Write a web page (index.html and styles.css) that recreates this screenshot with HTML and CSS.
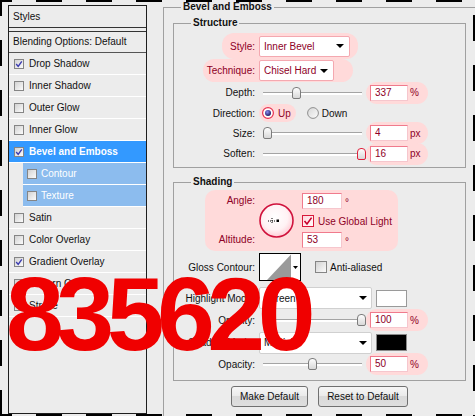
FILE: index.html
```html
<!DOCTYPE html>
<html>
<head>
<meta charset="utf-8">
<title>Layer Style - Bevel and Emboss</title>
<link rel="stylesheet" href="styles.css">
</head>
<body>
<div class="dialog">
  <nav class="styles-panel">
    <div class="panel-head">Styles</div>
    <div class="panel-blend">Blending Options: Default</div>
    <div class="item"><span class="cb"><svg viewBox="0 0 8 8"><path d="M1.2 4 L3.2 6.4 L6.8 1.4" fill="none" stroke="#3b3bb0" stroke-width="1.4"/></svg></span>Drop Shadow</div>
    <div class="item"><span class="cb"></span>Inner Shadow</div>
    <div class="item"><span class="cb"></span>Outer Glow</div>
    <div class="item"><span class="cb"></span>Inner Glow</div>
    <div class="item selected"><span class="cb"><svg viewBox="0 0 8 8"><path d="M1.2 4 L3.2 6.4 L6.8 1.4" fill="none" stroke="#3b3bb0" stroke-width="1.4"/></svg></span>Bevel and Emboss</div>
    <div class="item sub"><span class="cb"></span>Contour</div>
    <div class="item sub"><span class="cb"></span>Texture</div>
    <div class="item"><span class="cb"></span>Satin</div>
    <div class="item"><span class="cb"></span>Color Overlay</div>
    <div class="item"><span class="cb"><svg viewBox="0 0 8 8"><path d="M1.2 4 L3.2 6.4 L6.8 1.4" fill="none" stroke="#3b3bb0" stroke-width="1.4"/></svg></span>Gradient Overlay</div>
    <div class="item"><span class="cb"><svg viewBox="0 0 8 8"><path d="M1.2 4 L3.2 6.4 L6.8 1.4" fill="none" stroke="#3b3bb0" stroke-width="1.4"/></svg></span>Pattern Overlay</div>
    <div class="item"><span class="cb"></span>Stroke</div>
  </nav>

  <div class="settings">
    <fieldset class="group outer">
      <legend>Bevel and Emboss</legend>

      <fieldset class="group structure">
        <legend>Structure</legend>
        <div class="rows">
          <div class="row">
            <div class="hl hl-style">
              <span class="label">Style:</span>
              <div class="select red sel-style"><span>Inner Bevel</span><i class="arrow"></i></div>
            </div>
          </div>
          <div class="row">
            <div class="hl hl-tech">
              <span class="label">Technique:</span>
              <div class="select red sel-tech"><span>Chisel Hard</span><i class="arrow"></i></div>
            </div>
          </div>
          <div class="row">
            <span class="label">Depth:</span>
            <div class="slider"><i class="thumb" style="left:33px"></i></div>
            <div class="numhl"><span class="num">337</span><span class="unit">%</span></div>
          </div>
          <div class="row">
            <span class="label">Direction:</span>
            <div class="radio-hl">
              <svg class="radio" viewBox="0 0 12 12">
                <defs><radialGradient id="dot" cx="0.4" cy="0.35" r="0.7"><stop offset="0" stop-color="#8c8cf0"/><stop offset="1" stop-color="#14145a"/></radialGradient></defs>
                <circle cx="6" cy="6" r="5.4" fill="#fff" stroke="#e8304e" stroke-width="1.2"/>
                <circle cx="6" cy="6" r="3" fill="url(#dot)"/>
              </svg>
              <span class="hl-text">Up</span>
            </div>
            <div class="radio-off">
              <svg class="radio" viewBox="0 0 12 12">
                <defs><linearGradient id="rg" x1="0" y1="0" x2="1" y2="1"><stop offset="0" stop-color="#d6d6d6"/><stop offset="1" stop-color="#fdfdfd"/></linearGradient></defs>
                <circle cx="6" cy="6" r="5.4" fill="url(#rg)" stroke="#8e8e8e" stroke-width="1"/>
              </svg>
              <span>Down</span>
            </div>
          </div>
          <div class="row">
            <span class="label">Size:</span>
            <div class="slider"><i class="thumb" style="left:4px"></i></div>
            <div class="numhl"><span class="num">4</span><span class="unit">px</span></div>
          </div>
          <div class="row">
            <span class="label">Soften:</span>
            <div class="slider"><i class="thumb red" style="left:98px"></i></div>
            <div class="numhl"><span class="num">16</span><span class="unit">px</span></div>
          </div>
        </div>
      </fieldset>

      <fieldset class="group shading">
        <legend>Shading</legend>
        <div class="angle-box">
          <div class="angle-labels"><span>Angle:</span><span>Altitude:</span></div>
          <svg class="dial" viewBox="0 0 35 35">
            <defs><radialGradient id="dialfill" cx="0.45" cy="0.4" r="0.65"><stop offset="0" stop-color="#ffffff"/><stop offset="0.6" stop-color="#fff2f4"/><stop offset="1" stop-color="#ffc4ce"/></radialGradient></defs>
            <circle cx="17.5" cy="17.5" r="16.5" fill="url(#dialfill)" stroke="#d0123c" stroke-width="1.6"/>
            <line x1="9" y1="18" x2="17" y2="18" stroke="#000" stroke-width="1" stroke-dasharray="1 1"/>
            <line x1="13" y1="15" x2="13" y2="21" stroke="#000" stroke-width="1" stroke-dasharray="1 1"/>
            <rect x="17.5" y="16.5" width="2.5" height="2.5" fill="#000"/>
          </svg>
          <div class="angle-fields">
            <div class="field"><span class="num wide">180</span><span class="deg">°</span></div>
            <div class="global"><span class="cb cb-red"><svg viewBox="0 0 10 10"><path d="M1.5 5 L4 8 L8.6 1.6" fill="none" stroke="#c8002c" stroke-width="1.6"/></svg></span><span>Use Global Light</span></div>
            <div class="field"><span class="num wide">53</span><span class="deg">°</span></div>
          </div>
        </div>

        <div class="row gloss-row">
          <span class="label">Gloss Contour:</span>
          <svg class="contour" viewBox="0 0 42 28">
            <rect x="0.5" y="0.5" width="41" height="27" fill="#fff" stroke="#000"/>
            <polygon points="8,27 32,1.5 32,27" fill="#9a9a9a"/>
            <polygon points="34,13 39,13 36.5,16" fill="#000"/>
          </svg>
          <div class="aa"><span class="cb"></span><span>Anti-aliased</span></div>
        </div>

        <div class="row mode-row first">
          <span class="label">Highlight Mode:</span>
          <div class="select sel-mode"><span>Screen</span><i class="arrow"></i></div>
          <span class="swatch"></span>
        </div>
        <div class="row op-row">
          <span class="label">Opacity:</span>
          <div class="slider"><i class="thumb" style="left:98px"></i></div>
          <div class="numhl"><span class="num">100</span><span class="unit">%</span></div>
        </div>
        <div class="row mode-row shadow">
          <span class="label">Shadow Mode:</span>
          <div class="select sel-mode"><span>Multiply</span><i class="arrow"></i></div>
          <span class="swatch black"></span>
        </div>
        <div class="row op-row last">
          <span class="label">Opacity:</span>
          <div class="slider"><i class="thumb" style="left:49px"></i></div>
          <div class="numhl"><span class="num">50</span><span class="unit">%</span></div>
        </div>
      </fieldset>

      <div class="buttons">
        <button class="btn btn-make">Make Default</button>
        <button class="btn btn-reset">Reset to Default</button>
      </div>
    </fieldset>
  </div>
</div>

<div class="big-number">835620</div>
<div class="marquee"></div>
</body>
</html>
```

FILE: styles.css
```css
* { box-sizing: border-box; }
html, body { margin: 0; padding: 0; overflow: hidden; }
body {
  width: 475px;
  height: 416px;
  position: relative;
  background: #ececec;
  font-family: "Liberation Sans", Arial, sans-serif;
  font-size: 10px;
  color: #111;
}

.dialog { display: flex; align-items: flex-start; }

/* ---------- left styles list ---------- */
.styles-panel {
  margin: 5px 0 0 8px;
  width: 139px;
  height: 409px;
  border: 1px solid #1e1e1e;
  display: flex;
  flex-direction: column;
  flex: none;
}
.panel-head {
  flex: none;
  height: 22px;
  line-height: 21px;
  padding-left: 4px;
  border-bottom: 1px solid #333;
}
.panel-blend {
  flex: none;
  margin-top: 3px;
  height: 22px;
  line-height: 20px;
  padding-left: 4px;
  border-top: 1px solid #333;
  border-bottom: 1px solid #555;
}
.item {
  flex: none;
  height: 22px;
  display: flex;
  align-items: center;
  padding-left: 5px;
  border-bottom: 1px solid #fff;
  white-space: nowrap;
}
.cb {
  flex: none;
  width: 10px;
  height: 10px;
  margin-right: 5px;
  border: 1px solid #858585;
  background: linear-gradient(135deg, #d2d2d2, #fbfbfb);
  display: flex;
  align-items: center;
  justify-content: center;
}
.cb svg { width: 8px; height: 8px; display: block; }
.item.selected { background: #3399ff; color: #fff; font-weight: bold; }
.item.sub { margin-left: 14px; padding-left: 4px; background: #8cbcee; color: #fff; }
.item.sub .cb { margin-right: 4px; }

/* ---------- right settings ---------- */
.settings { margin: 1px 0 0 16px; flex: none; }
.group {
  margin: 0;
  padding: 0;
  min-width: 0;
  border: 1px solid #a0a0a0;
}
.group > legend {
  padding: 0 2px;
  font-weight: bold;
  font-size: 10px;
  line-height: 12px;
  color: #111;
  margin-left: 17px;
}
.outer { width: 312px; height: 415px; border-right: none; border-bottom: none; }

.structure { margin: 4px 0 0 9px; width: 293px; padding: 4px 0 3px; }
.rows {
  display: grid;
  grid-template-rows: 26px 23px 21px 20px 20px 21px;
}
.row { display: flex; align-items: center; }
.label {
  flex: none;
  width: 81px;
  margin-right: 4px;
  text-align: right;
  white-space: nowrap;
}
.hl {
  display: flex;
  align-items: center;
  background: #ffdada;
  border-radius: 12px;
}
.hl .label, .hl-text, .angle-labels, .global, .deg, .unit, .num { color: #8e0026; }
.hl-style { margin-left: 48px; padding-right: 8px; height: 26px; }
.hl-style .label { width: 33px; }
.hl-tech { margin-left: 29px; padding-right: 19px; height: 23px; }
.hl-tech .label { width: 52px; }

.select {
  flex: none;
  display: flex;
  align-items: center;
  justify-content: space-between;
  height: 21px;
  padding: 0 5px 0 4px;
  background: #fff;
  border: 1px solid #d0d0d0;
  border-radius: 2px;
  white-space: nowrap;
}
.select.red { border-color: #f4a8b0; color: #8e0026; }
.sel-style { width: 91px; }
.sel-tech { width: 75px; }
.arrow {
  width: 0;
  height: 0;
  border-left: 4px solid transparent;
  border-right: 4px solid transparent;
  border-top: 4px solid #000;
}

.slider { position: relative; flex: none; width: 107px; height: 14px; }
.slider::before {
  content: "";
  position: absolute;
  left: 4px;
  right: 4px;
  top: 6px;
  height: 2px;
  border-top: 1px solid #a4a4a4;
  background: #fff;
}
.thumb {
  position: absolute;
  top: 1px;
  width: 9px;
  height: 12px;
  border: 1px solid #7c7c7c;
  border-radius: 4px 4px 2px 2px;
  background: linear-gradient(#fdfdfd, #d8d8d8);
}
.thumb.red { border-color: #e0203c; }

.numhl {
  flex: none;
  display: flex;
  align-items: center;
  width: 62px;
  height: 22px;
  padding-left: 4px;
  background: #ffdada;
  border-radius: 11px;
}
.num {
  flex: none;
  width: 38px;
  height: 16px;
  line-height: 14px;
  padding-left: 4px;
  background: #fff;
  border: 1px solid #f07a8c;
  border-right-color: #f6c6cd;
  border-bottom-color: #f6c6cd;
}
.num.wide { width: 40px; }
.unit { margin-left: 2px; }

.radio-hl {
  display: flex;
  align-items: center;
  height: 18px;
  padding: 0 5px 0 3px;
  background: #ffdada;
  border-radius: 9px;
}
.radio { flex: none; width: 12px; height: 12px; margin-right: 4px; display: block; }
.radio-off { display: flex; align-items: center; margin-left: 11px; }
.radio-off .radio { margin-right: 3px; }

/* shading */
.shading { margin: 8px 0 0 9px; width: 293px; padding: 2px 0 6px; }
.angle-box {
  display: flex;
  margin-left: 31px;
  width: 193px;
  height: 61px;
  background: #ffdada;
  border-radius: 10px;
}
.angle-labels {
  width: 50px;
  flex: none;
  display: flex;
  flex-direction: column;
  justify-content: space-between;
  align-items: flex-end;
  padding: 5px 0;
  line-height: 12px;
}
.dial { flex: none; width: 35px; height: 35px; margin-left: 4px; align-self: center; display: block; }
.angle-fields { display: flex; flex-direction: column; margin-left: 8px; padding-top: 3px; }
.field { display: flex; align-items: flex-start; }
.deg { margin-left: 3px; margin-top: 5px; line-height: 10px; }
.global { display: flex; align-items: center; height: 14px; margin: 5px 0 4px; white-space: nowrap; }
.cb-red {
  width: 12px;
  height: 12px;
  margin-right: 4px;
  border-color: #d8183a;
  background: linear-gradient(135deg, #ffd6dc, #fff);
}
.cb-red svg { width: 10px; height: 10px; }

.gloss-row { margin-top: 2px; height: 28px; }
.contour { flex: none; width: 42px; height: 28px; display: block; }
.aa { display: flex; align-items: center; margin-left: 14px; }
.aa .cb { width: 12px; height: 12px; margin-right: 3px; }

.mode-row { height: 22px; }
.mode-row.first { margin-top: 6px; }
.mode-row.shadow { height: 23px; }
.op-row { height: 22px; }
.op-row.last { height: 20px; }
.sel-mode { width: 113px; height: 22px; padding-right: 4px; }
.swatch {
  flex: none;
  width: 31px;
  height: 17px;
  margin-left: 4px;
  border: 1px solid #9a9a9a;
  background: #fff;
}
.swatch.black { background: #000; border-color: #8a8a8a; }

.buttons { display: flex; gap: 10px; margin: 5px 0 0 67px; }
.btn {
  height: 21px;
  padding: 0;
  border: 1px solid #707070;
  border-radius: 3px;
  background: linear-gradient(#f6f6f6, #ebebeb 45%, #dadada 50%, #dedede);
  font-family: "Liberation Sans", Arial, sans-serif;
  font-size: 10px;
  color: #111;
}
.btn-make { width: 77px; }
.btn-reset { width: 90px; }

/* overlay number */
.big-number {
  position: absolute;
  left: 6px;
  top: 262px;
  font-family: "Liberation Sans", Arial, sans-serif;
  font-weight: bold;
  font-size: 104px;
  line-height: 1;
  letter-spacing: -7.5px;
  color: #f00000;
  pointer-events: none;
}

/* marching dashed border */
.marquee {
  position: absolute;
  left: 0;
  top: 0;
  width: 475px;
  height: 416px;
  pointer-events: none;
  background:
    linear-gradient(90deg, #000 26px, transparent 26px) 36px 0 / 50px 2px repeat-x,
    linear-gradient(90deg, #000 26px, transparent 26px) 36px 100% / 50px 2px repeat-x,
    linear-gradient(180deg, #000 26px, transparent 26px) 0 40px / 2px 50px repeat-y,
    linear-gradient(180deg, #000 26px, transparent 26px) 100% 15px / 2px 50px repeat-y;
}
```
